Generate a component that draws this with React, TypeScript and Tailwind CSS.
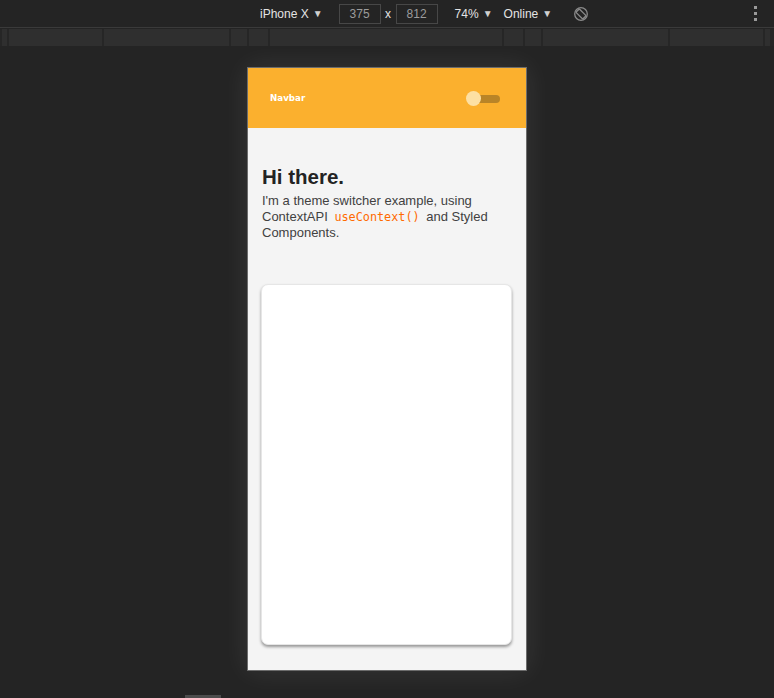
import React from 'react';

const rulerSegments = [2, 7, 95, 127, 18, 21, 234, 21, 18, 127, 95, 7, 2];

const Caret: React.FC = () => (
  <span className="ml-[4px] text-[10px] leading-none text-[#d0d0d0]">▼</span>
);

const Toolbar: React.FC = () => (
  <div className="h-[28px] shrink-0 border-b border-[#3a3a3a] flex items-center text-[12px] text-[#e3e3e3] font-['Liberation_Sans',sans-serif]">
    <div className="ml-[260px] flex items-center">
      iPhone X
      <Caret />
    </div>
    <div className="ml-[16px] w-[42px] h-[20px] border border-[#474747] flex items-center justify-center text-[#9c9c9c]">375</div>
    <span className="w-[15px] text-center text-[#e3e3e3]">x</span>
    <div className="w-[42px] h-[20px] border border-[#474747] flex items-center justify-center text-[#9c9c9c]">812</div>
    <div className="ml-[17px] flex items-center">
      74%
      <Caret />
    </div>
    <div className="ml-[11px] flex items-center">
      Online
      <Caret />
    </div>
    <svg className="ml-[21px]" width="16" height="16" viewBox="0 0 16 16" fill="none" stroke="#8a8a8a" strokeWidth="1.3">
      <circle cx="8" cy="8" r="6.3" />
      <rect x="5.6" y="3.2" width="4.8" height="9.6" rx="0.8" transform="rotate(-45 8 8)" />
    </svg>
    <div className="ml-auto mr-[17px] flex flex-col gap-[3px]">
      <span className="block w-[3px] h-[3px] bg-[#9a9a9a]" />
      <span className="block w-[3px] h-[3px] bg-[#9a9a9a]" />
      <span className="block w-[3px] h-[3px] bg-[#9a9a9a]" />
    </div>
  </div>
);

const Ruler: React.FC = () => (
  <div className="mt-[1px] h-[17px] shrink-0 flex bg-[#2f2f2f]">
    {rulerSegments.map((w, i) => (
      <div key={i} style={{ width: w }} className="h-full border-r-2 border-[#262626]" />
    ))}
  </div>
);

const ThemeToggle: React.FC = () => (
  <div className="relative w-[34px] h-[15px] flex items-center">
    <div className="ml-[3px] w-[31px] h-[8px] rounded-full bg-[#b98427]" />
    <div className="absolute left-0 top-0 w-[15px] h-[15px] rounded-full bg-[#fde0a3]" />
  </div>
);

const Device: React.FC = () => (
  <div className="w-[280px] h-[604px] border border-[#6c6c6c] bg-[#f4f4f4] flex flex-col shadow-[0_0_26px_rgba(255,255,255,0.09)]">
    <nav className="h-[60px] shrink-0 bg-[#fbb02e] flex items-center justify-between pl-[22px] pr-[26px] pt-[1px]">
      <span className="text-[8.7px] font-bold text-white font-['DejaVu_Sans',sans-serif]">Navbar</span>
      <ThemeToggle />
    </nav>
    <div className="flex-1 flex flex-col pl-[13px] pr-[14px] pt-[37px] pb-[24px] font-['Liberation_Sans',sans-serif]">
      <div className="pl-[1px]">
        <h1 className="text-[20.5px] leading-[24px] font-bold text-[#232323]">Hi there.</h1>
        <p className="mt-[4px] text-[13px] leading-[16px] text-[#414141]">
          I'm a theme switcher example, using ContextAPI{' '}
          <code className="px-[3px] text-[11.8px] text-[#ff6a00] font-['DejaVu_Sans_Mono',monospace]">useContext()</code>{' '}
          and Styled Components.
        </p>
      </div>
      <div className="mt-[43px] h-[361px] rounded-[7px] bg-white border border-[#e6e6e6] shadow-[0_2px_3px_rgba(0,0,0,0.38)]" />
    </div>
  </div>
);

export default function App() {
  return (
    <div className="w-[774px] h-[698px] bg-[#242424] flex flex-col overflow-hidden">
      <Toolbar />
      <Ruler />
      <div className="flex-1 flex justify-center pt-[21px]">
        <Device />
      </div>
      <div className="h-[3px] shrink-0 flex">
        <div className="ml-[185px] w-[36px] h-full bg-[#4c4c4c]" />
      </div>
    </div>
  );
}
